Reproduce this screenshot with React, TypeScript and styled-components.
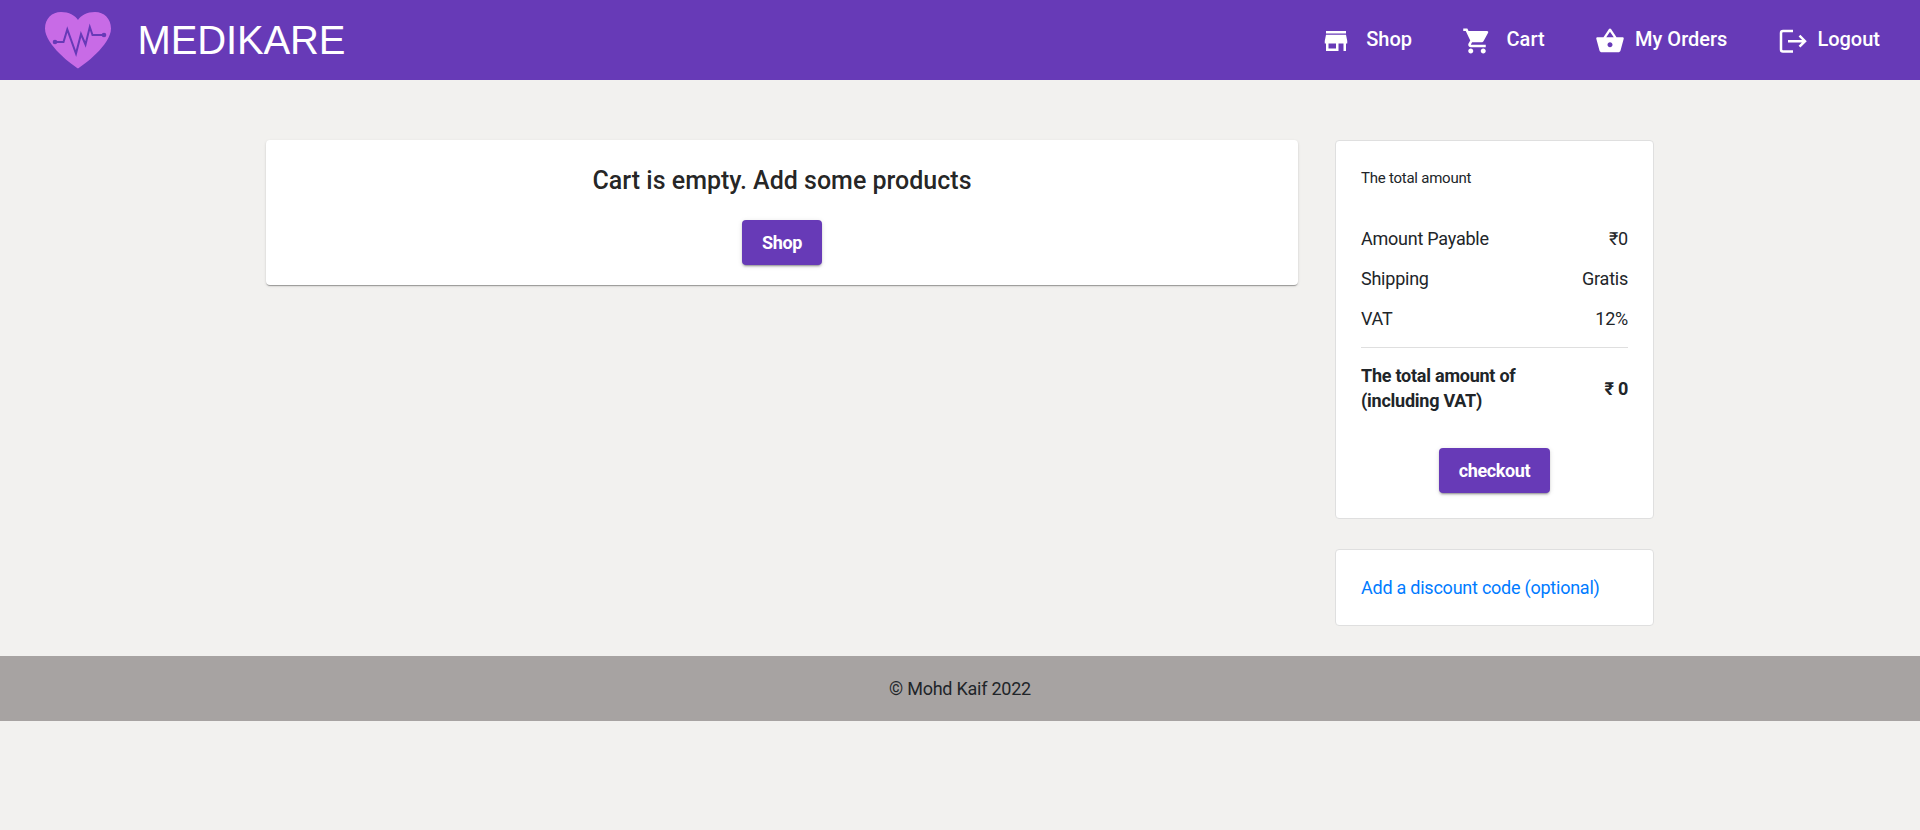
import React from "react";
import styled, { createGlobalStyle } from "styled-components";
import { MdStore, MdShoppingCart, MdShoppingBasket } from "react-icons/md";

const GlobalStyle = createGlobalStyle`
  *, *::before, *::after { box-sizing: border-box; }
  body {
    margin: 0;
    background: #f2f1ef;
    color: #212529;
    font-family: Roboto, "Noto Sans", sans-serif;
    font-size: 18px;
    font-weight: 400;
    letter-spacing: -0.24px;
    line-height: 25px;
  }
  h1, h5, p, ul { margin: 0; padding: 0; font-weight: inherit; }
`;

const Header = styled.header`
  height: 80px;
  padding: 0 40px 0 44px;
  display: flex;
  align-items: center;
  justify-content: space-between;
  background: #673ab7;
  color: #fff;
`;

const Brand = styled.div`
  display: flex;
  align-items: center;
  gap: 23.5px;
`;

const BrandName = styled.h1`
  padding-bottom: 1px;
  font: 400 40px/48px "Liberation Sans", Arial, sans-serif;
  letter-spacing: -0.15px;
`;

const Nav = styled.nav`
  display: flex;
  align-items: center;
`;

const NavLink = styled.a<{ $gap: number; $before?: number }>`
  display: flex;
  align-items: center;
  gap: ${(p) => p.$gap}px;
  margin-left: ${(p) => p.$before ?? 0}px;
  padding-bottom: 2px;
  color: #fff;
  font-size: 20px;
  font-weight: 500;
  letter-spacing: 0;
  line-height: 28px;
  white-space: nowrap;

  svg { display: block; margin-top: 4px; }
`;

const Main = styled.main`
  width: 1388px;
  margin: 0 auto;
  padding: 60px 0 30px;
  display: grid;
  grid-template-columns: 1032px 319px;
  justify-content: space-between;
  align-items: start;
`;

const EmptyCart = styled.section`
  height: 145px;
  padding-top: 25px;
  display: flex;
  flex-direction: column;
  align-items: center;
  gap: 23px;
  background: #fff;
  border-radius: 4px;
  box-shadow: 0 2px 1px -1px rgba(0, 0, 0, 0.2), 0 1px 1px 0 rgba(0, 0, 0, 0.14),
    0 1px 3px 0 rgba(0, 0, 0, 0.12);
`;

const EmptyTitle = styled.h5`
  color: rgba(0, 0, 0, 0.87);
  font-size: 25px;
  font-weight: 500;
  letter-spacing: 0;
  line-height: 32px;
`;

const Button = styled.button`
  height: 45px;
  padding: 0 20px;
  border: 0;
  border-radius: 4px;
  background: #673ab7;
  color: #fff;
  font: 700 18px/25px Roboto, sans-serif;
  letter-spacing: -0.35px;
  box-shadow: 0 3px 1px -2px rgba(0, 0, 0, 0.2), 0 2px 2px 0 rgba(0, 0, 0, 0.14),
    0 1px 5px 0 rgba(0, 0, 0, 0.12);
`;

const Sidebar = styled.aside`
  display: flex;
  flex-direction: column;
  gap: 30px;
`;

const Card = styled.section<{ $height: number }>`
  height: ${(p) => p.$height}px;
  padding: 25px;
  display: flex;
  flex-direction: column;
  background: #fff;
  border: 1px solid #dfdfdf;
  border-radius: 4px;
`;

const CardTitle = styled.p`
  font-size: 15px;
  line-height: 24px;
  margin-bottom: 28px;
`;

const Row = styled.div`
  height: 40px;
  display: flex;
  align-items: center;
  justify-content: space-between;
`;

const TotalRow = styled(Row)`
  height: 82px;
  margin-top: 9px;
  padding-bottom: 1px;
  border-top: 1px solid #dfdfdf;
  font-weight: 700;
`;

const TotalLabel = styled.span`
  width: 180px;
`;

const Actions = styled.div`
  display: flex;
  justify-content: center;
  margin-top: 19px;
`;

const Discount = styled.a`
  color: #007bff;
`;

const Footer = styled.footer`
  height: 65px;
  display: flex;
  align-items: center;
  justify-content: center;
  background: #a7a3a2;
`;

const HeartLogo = () => (
  <svg width="70" height="60" viewBox="0 0 70 60" fill="none">
    <path
      d="M34 58.500C29 55.500 1 35 1 18.500C1 8.500 8 2 17 2C25 2 31 5.500 34 10C37 5.500 43 2 51 2C60 2 67 8.500 67 18.500C67 35 39 55.500 34 58.500Z"
      fill="#c86be6"
    />
    <path d="M11 32H19.500L23.300 19.500L32 43.500L37 24L41.500 34.500L45.800 17L48.500 25H60" stroke="#673ab7" strokeWidth="2" />
    <circle cx="11" cy="32" r="2.300" fill="#673ab7" />
    <circle cx="60" cy="25" r="2.300" fill="#673ab7" />
  </svg>
);

const LogoutIcon = () => (
  <svg width="28" height="26" viewBox="0 0 28 26" fill="none" stroke="#fff" strokeWidth="2.500">
    <path d="M14 3H4Q2 3 2 5V21.500Q2 23.500 4 23.500H14" />
    <path d="M9 13.200H26M20.500 7.700L26 13.200L20.500 18.700" />
  </svg>
);

const rows = [
  ["Amount Payable", "₹0"],
  ["Shipping", "Gratis"],
  ["VAT", "12%"],
];

export default function App() {
  return (
    <>
      <GlobalStyle />
      <Header>
        <Brand>
          <HeartLogo />
          <BrandName>MEDIKARE</BrandName>
        </Brand>
        <Nav>
          <NavLink $gap={15.5}><MdStore size={30} />Shop</NavLink>
          <NavLink $gap={15} $before={49.5}><MdShoppingCart size={30} />Cart</NavLink>
          <NavLink $gap={10.5} $before={50}><MdShoppingBasket size={30} />My Orders</NavLink>
          <NavLink $gap={10} $before={52}><LogoutIcon />Logout</NavLink>
        </Nav>
      </Header>
      <Main>
        <EmptyCart>
          <EmptyTitle>Cart is empty. Add some products</EmptyTitle>
          <Button>Shop</Button>
        </EmptyCart>
        <Sidebar>
          <Card $height={379}>
            <CardTitle>The total amount</CardTitle>
            {rows.map(([label, value]) => (
              <Row key={label}>
                <span>{label}</span>
                <span>{value}</span>
              </Row>
            ))}
            <TotalRow>
              <TotalLabel>The total amount of (including VAT)</TotalLabel>
              <span>₹ 0</span>
            </TotalRow>
            <Actions>
              <Button>checkout</Button>
            </Actions>
          </Card>
          <Card $height={77}>
            <Discount>Add a discount code (optional)</Discount>
          </Card>
        </Sidebar>
      </Main>
      <Footer>© Mohd Kaif 2022</Footer>
    </>
  );
}
